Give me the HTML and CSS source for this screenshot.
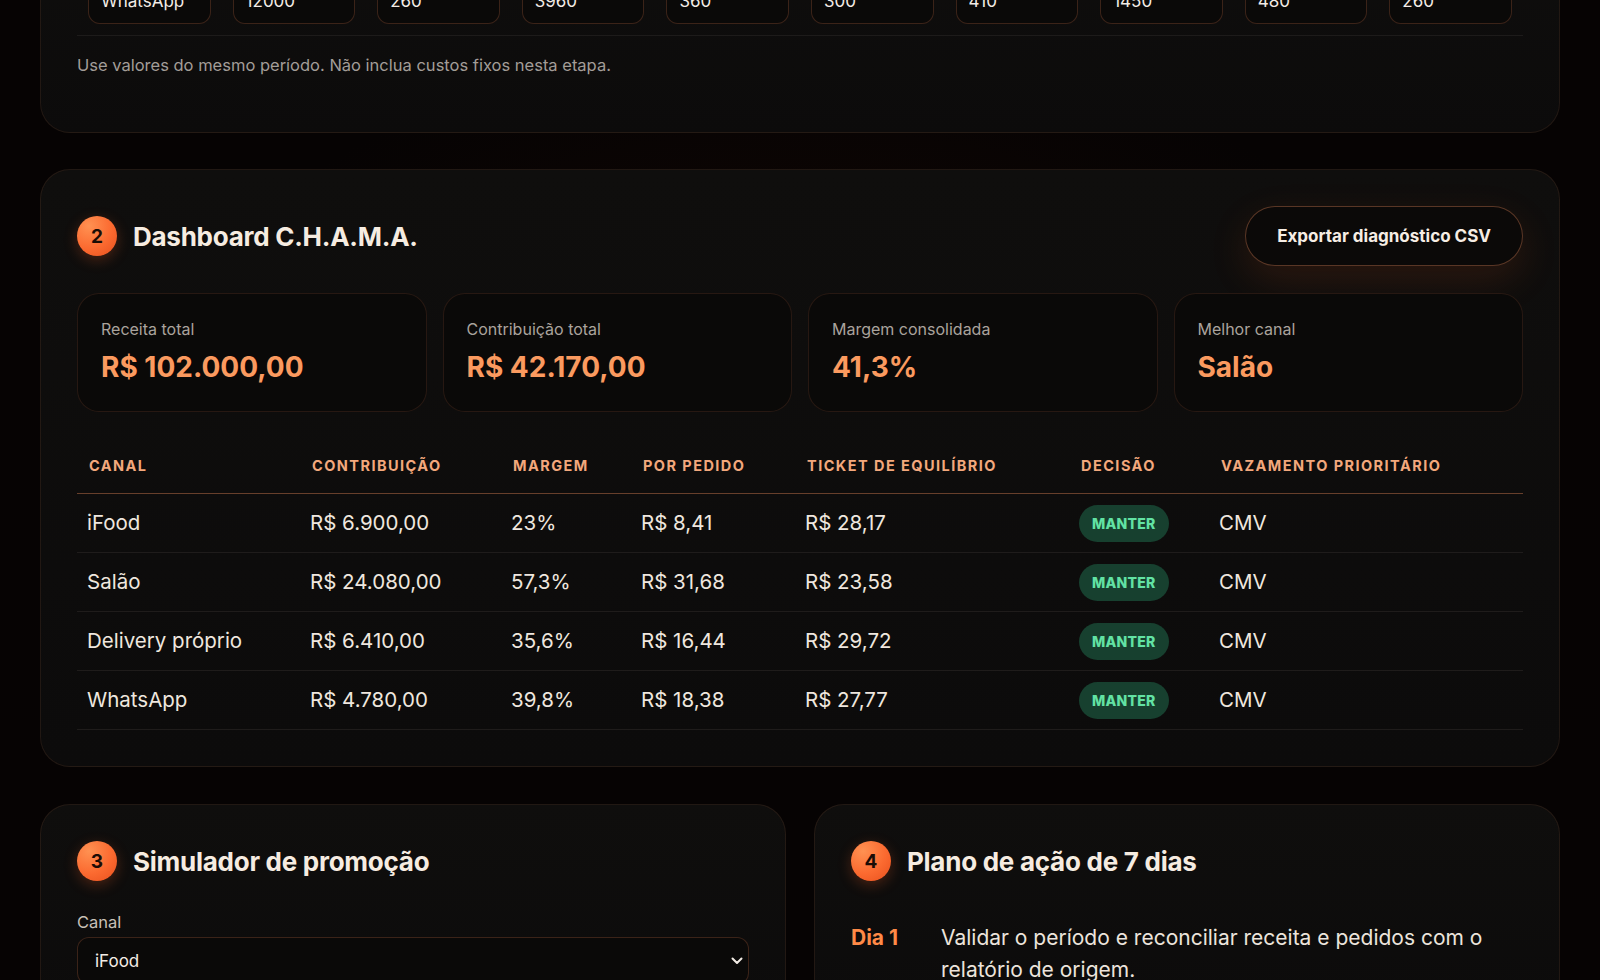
FILE: index.html
```html
<!DOCTYPE html>
<html lang="pt-BR">
<head>
<meta charset="utf-8">
<title>Dashboard C.H.A.M.A.</title>
<link rel="stylesheet" href="styles.css">
</head>
<body>
<main class="page">
  <section class="card card-inputs">
    <table class="input-table">
      <tbody>
        <tr>
          <td><input class="field" type="text" value="WhatsApp"></td>
          <td><input class="field" type="text" value="12000"></td>
          <td><input class="field" type="text" value="260"></td>
          <td><input class="field" type="text" value="3960"></td>
          <td><input class="field" type="text" value="360"></td>
          <td><input class="field" type="text" value="300"></td>
          <td><input class="field" type="text" value="410"></td>
          <td><input class="field" type="text" value="1450"></td>
          <td><input class="field" type="text" value="480"></td>
          <td><input class="field" type="text" value="260"></td>
        </tr>
      </tbody>
    </table>
    <p class="note">Use valores do mesmo período. Não inclua custos fixos nesta etapa.</p>
  </section>

  <section class="card card-dashboard">
    <header class="card-head">
      <div class="head-title">
        <span class="step">2</span>
        <h2 class="title">Dashboard C.H.A.M.A.</h2>
      </div>
      <button class="btn-export" type="button">Exportar diagnóstico CSV</button>
    </header>

    <div class="stats">
      <div class="stat">
        <div class="stat-label">Receita total</div>
        <div class="stat-value">R$ 102.000,00</div>
      </div>
      <div class="stat">
        <div class="stat-label">Contribuição total</div>
        <div class="stat-value">R$ 42.170,00</div>
      </div>
      <div class="stat">
        <div class="stat-label">Margem consolidada</div>
        <div class="stat-value">41,3%</div>
      </div>
      <div class="stat">
        <div class="stat-label">Melhor canal</div>
        <div class="stat-value">Salão</div>
      </div>
    </div>

    <table class="data-table">
      <thead>
        <tr>
          <th class="c1">Canal</th>
          <th class="c2">Contribuição</th>
          <th class="c3">Margem</th>
          <th class="c4">Por pedido</th>
          <th class="c5">Ticket de equilíbrio</th>
          <th class="c6">Decisão</th>
          <th class="c7">Vazamento prioritário</th>
        </tr>
      </thead>
      <tbody>
        <tr>
          <td>iFood</td><td>R$ 6.900,00</td><td>23%</td><td>R$ 8,41</td><td>R$ 28,17</td>
          <td><span class="tag">MANTER</span></td><td>CMV</td>
        </tr>
        <tr>
          <td>Salão</td><td>R$ 24.080,00</td><td>57,3%</td><td>R$ 31,68</td><td>R$ 23,58</td>
          <td><span class="tag">MANTER</span></td><td>CMV</td>
        </tr>
        <tr>
          <td>Delivery próprio</td><td>R$ 6.410,00</td><td>35,6%</td><td>R$ 16,44</td><td>R$ 29,72</td>
          <td><span class="tag">MANTER</span></td><td>CMV</td>
        </tr>
        <tr>
          <td>WhatsApp</td><td>R$ 4.780,00</td><td>39,8%</td><td>R$ 18,38</td><td>R$ 27,77</td>
          <td><span class="tag">MANTER</span></td><td>CMV</td>
        </tr>
      </tbody>
    </table>
  </section>

  <div class="split">
    <section class="card card-half">
      <header class="head-title">
        <span class="step">3</span>
        <h2 class="title">Simulador de promoção</h2>
      </header>
      <label class="field-label" for="canal">Canal</label>
      <div class="select-wrap">
        <select id="canal" class="select">
          <option>iFood</option>
          <option>Salão</option>
          <option>Delivery próprio</option>
          <option>WhatsApp</option>
        </select>
        <svg class="chevron" width="12" height="8" viewBox="0 0 12 8" aria-hidden="true"><path d="M1.5 1.5 6 6l4.5-4.5" fill="none" stroke="#f2ebe4" stroke-width="2" stroke-linecap="round" stroke-linejoin="round"/></svg>
      </div>
    </section>

    <section class="card card-half">
      <header class="head-title">
        <span class="step">4</span>
        <h2 class="title">Plano de ação de 7 dias</h2>
      </header>
      <ol class="plan">
        <li class="plan-item">
          <span class="plan-day">Dia 1</span>
          <span class="plan-text">Validar o período e reconciliar receita e pedidos com o relatório de origem.</span>
        </li>
      </ol>
    </section>
  </div>
</main>
</body>
</html>
```

FILE: styles.css
```css
* { box-sizing: border-box; }

html, body {
  margin: 0;
  padding: 0;
}

body {
  background: #060303;
  background-image:
    radial-gradient(ellipse 900px 500px at 50% 40%, rgba(40, 14, 6, 0.35), transparent 70%);
  font-family: Inter, "Noto Sans", "Liberation Sans", sans-serif;
  color: #efe7df;
  overflow: hidden;
  height: 980px;
}

.page {
  margin-top: -70px;
  padding: 0 40px;
  display: flex;
  flex-direction: column;
  gap: 36px;
}

.card {
  background: linear-gradient(180deg, #0f0e0d 0%, #0c0b0b 100%);
  border: 1px solid rgba(255, 150, 100, 0.09);
  border-radius: 30px;
  padding: 36px;
}

/* card 1 */
.card-inputs {
  padding-bottom: 55px;
}

.input-table {
  width: 100%;
  border-collapse: collapse;
  table-layout: fixed;
}

.input-table td {
  padding: 11px;
  border-bottom: 1px solid #1d1b1a;
}

.field {
  display: block;
  width: 100%;
  height: 46px;
  background: #0a0908;
  border: 1px solid rgba(255, 140, 90, 0.2);
  border-radius: 12px;
  color: #f3ece6;
  font-family: Inter, "Noto Sans", sans-serif;
  font-size: 17px;
  padding: 0 12px;
  outline: none;
}

.note {
  margin: 17px 0 0;
  font-size: 16.5px;
  line-height: 24px;
  color: #a39d98;
}

/* headers */
.card-head {
  display: flex;
  align-items: center;
  justify-content: space-between;
  height: 60px;
}

.head-title {
  display: flex;
  align-items: center;
  gap: 16px;
}

.step {
  width: 40px;
  height: 40px;
  border-radius: 50%;
  background: radial-gradient(circle at 30% 25%, #ff9152 0%, #fb6a30 55%, #e8501e 100%);
  color: #1a0c06;
  font-weight: 700;
  font-size: 19px;
  display: flex;
  align-items: center;
  justify-content: center;
  box-shadow: 0 4px 14px rgba(255, 100, 40, 0.25);
}

.title {
  margin: 0;
  font-size: 26px;
  font-weight: 700;
  color: #f6ece1;
  letter-spacing: -0.01em;
}

.btn-export {
  height: 60px;
  padding: 0 31px;
  border-radius: 999px;
  background: #0b0908;
  border: 1px solid rgba(255, 150, 100, 0.32);
  color: #f6ede4;
  font-family: Inter, "Noto Sans", sans-serif;
  font-weight: 700;
  font-size: 17px;
  box-shadow: 0 14px 40px rgba(255, 100, 30, 0.12);
}

/* stats */
.stats {
  margin-top: 27px;
  display: grid;
  grid-template-columns: repeat(4, 1fr);
  gap: 16px;
}

.stat {
  background: #0a0908;
  border: 1px solid rgba(255, 140, 90, 0.12);
  border-radius: 22px;
  padding: 25px 23px 26px;
}

.stat-label {
  font-size: 16px;
  line-height: 20px;
  color: #aaa39d;
}

.stat-value {
  margin-top: 10px;
  font-size: 28px;
  line-height: 36px;
  font-weight: 700;
  color: #fb9a5f;
}

/* data table */
.data-table {
  margin-top: 29px;
  width: 100%;
  border-collapse: collapse;
  table-layout: fixed;
}

.data-table th {
  text-align: left;
  padding: 16px 12px 18px;
  font-size: 14.5px;
  line-height: 18px;
  font-weight: 700;
  text-transform: uppercase;
  letter-spacing: 0.1em;
  color: #f3a87c;
  border-bottom: 1px solid rgba(240, 140, 90, 0.4);
}

.data-table .c1 { width: 223px; }
.data-table .c2 { width: 201px; }
.data-table .c3 { width: 130px; }
.data-table .c4 { width: 164px; }
.data-table .c5 { width: 274px; }
.data-table .c6 { width: 140px; }

.data-table td {
  padding: 10px 11px 10px 10px;
  height: 59px;
  font-size: 20.5px;
  line-height: 28px;
  color: #efe7df;
  border-bottom: 1px solid #1f1c1b;
  white-space: nowrap;
}

.tag {
  display: inline-block;
  height: 37px;
  line-height: 37px;
  padding: 0 13px;
  border-radius: 999px;
  background: #17402f;
  color: #62e2a4;
  font-size: 14px;
  font-weight: 800;
  letter-spacing: 0.02em;
  vertical-align: middle;
}

/* bottom split */
.split {
  margin-top: 1px;
  display: grid;
  grid-template-columns: 1fr 1fr;
  gap: 28px;
}

.card-half {
  padding-bottom: 40px;
}

.field-label {
  display: block;
  margin-top: 30px;
  font-size: 16.5px;
  line-height: 22px;
  color: #c9c1b9;
}

.select-wrap {
  position: relative;
  margin-top: 4px;
}

.select {
  display: block;
  width: 100%;
  height: 48px;
  appearance: none;
  -webkit-appearance: none;
  background: #0a0908;
  border: 1px solid rgba(255, 140, 90, 0.2);
  border-radius: 12px;
  color: #f3ece6;
  font-family: Inter, "Noto Sans", sans-serif;
  font-size: 17px;
  padding: 0 17px;
}

.chevron {
  position: absolute;
  right: 6px;
  top: 20px;
}

.plan {
  list-style: none;
  margin: 30px 0 0;
  padding: 0;
}

.plan-item {
  display: grid;
  grid-template-columns: 90px 1fr;
  padding-top: 11px;
  font-size: 21px;
  line-height: 32px;
}

.plan-day {
  font-weight: 700;
  color: #ff8a47;
}

.plan-text {
  color: #ece4dc;
}
```
